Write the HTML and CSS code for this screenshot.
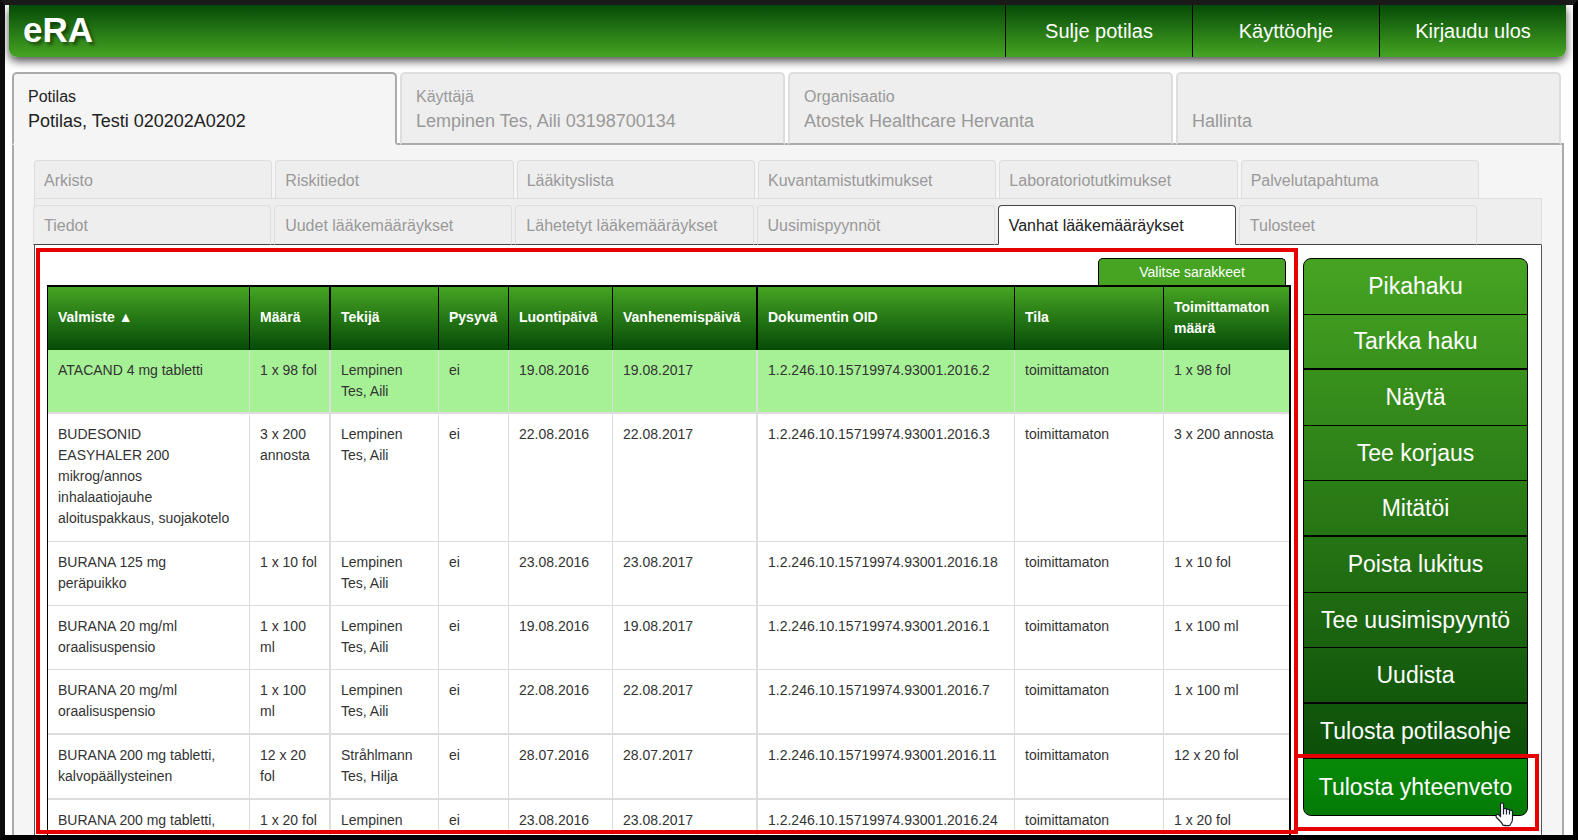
FILE: index.html
```html
<!DOCTYPE html>
<html lang="fi">
<head>
<meta charset="utf-8">
<title>eRA</title>
<link rel="stylesheet" href="styles.css">
</head>
<body>
<div class="app">
  <header class="topbar">
    <h1 class="brand">eRA</h1>
    <nav class="topnav">
      <a href="#">Sulje potilas</a>
      <a href="#">Käyttöohje</a>
      <a href="#">Kirjaudu ulos</a>
    </nav>
  </header>

  <main class="main">
    <nav class="tabs">
      <a class="tab active" href="#"><span class="tab-label">Potilas</span><span class="tab-value">Potilas, Testi 020202A0202</span></a>
      <a class="tab" href="#"><span class="tab-label">Käyttäjä</span><span class="tab-value">Lempinen Tes, Aili 03198700134</span></a>
      <a class="tab" href="#"><span class="tab-label">Organisaatio</span><span class="tab-value">Atostek Healthcare Hervanta</span></a>
      <a class="tab" href="#"><span class="tab-value">Hallinta</span></a>
    </nav>

    <section class="panel">
      <nav class="subtabs subtabs-upper">
        <a href="#">Arkisto</a>
        <a href="#">Riskitiedot</a>
        <a href="#">Lääkityslista</a>
        <a href="#">Kuvantamistutkimukset</a>
        <a href="#">Laboratoriotutkimukset</a>
        <a href="#">Palvelutapahtuma</a>
      </nav>
      <div class="strip">
        <nav class="subtabs subtabs-lower">
          <a href="#">Tiedot</a>
          <a href="#">Uudet lääkemääräykset</a>
          <a href="#">Lähetetyt lääkemääräykset</a>
          <a href="#">Uusimispyynnöt</a>
          <a class="active" href="#">Vanhat lääkemääräykset</a>
          <a href="#">Tulosteet</a>
        </nav>
      </div>

      <div class="content">
        <div class="list">
          <button class="columns-button" type="button">Valitse sarakkeet</button>
          <table class="grid">
            <colgroup>
              <col class="c-product"><col class="c-amount"><col class="c-author"><col class="c-permanent"><col class="c-created"><col class="c-expires"><col class="c-oid"><col class="c-state"><col class="c-left">
            </colgroup>
            <thead>
              <tr><th>Valmiste ▲</th><th>Määrä</th><th>Tekijä</th><th>Pysyvä</th><th>Luontipäivä</th><th>Vanhenemispäivä</th><th>Dokumentin OID</th><th>Tila</th><th>Toimittamaton määrä</th></tr>
            </thead>
            <tbody>
              <tr class="selected"><td>ATACAND 4 mg tabletti</td><td>1 x 98 fol</td><td>Lempinen Tes, Aili</td><td>ei</td><td>19.08.2016</td><td>19.08.2017</td><td>1.2.246.10.15719974.93001.2016.2</td><td>toimittamaton</td><td>1 x 98 fol</td></tr>
              <tr class="tall"><td>BUDESONID<br>EASYHALER 200 mikrog/annos inhalaatiojauhe aloituspakkaus, suojakotelo</td><td>3 x 200 annosta</td><td>Lempinen Tes, Aili</td><td>ei</td><td>22.08.2016</td><td>22.08.2017</td><td>1.2.246.10.15719974.93001.2016.3</td><td>toimittamaton</td><td>3 x 200 annosta</td></tr>
              <tr><td>BURANA 125 mg<br>peräpuikko</td><td>1 x 10 fol</td><td>Lempinen Tes, Aili</td><td>ei</td><td>23.08.2016</td><td>23.08.2017</td><td>1.2.246.10.15719974.93001.2016.18</td><td>toimittamaton</td><td>1 x 10 fol</td></tr>
              <tr><td>BURANA 20 mg/ml oraalisuspensio</td><td>1 x 100 ml</td><td>Lempinen Tes, Aili</td><td>ei</td><td>19.08.2016</td><td>19.08.2017</td><td>1.2.246.10.15719974.93001.2016.1</td><td>toimittamaton</td><td>1 x 100 ml</td></tr>
              <tr class="ruled"><td>BURANA 20 mg/ml oraalisuspensio</td><td>1 x 100 ml</td><td>Lempinen Tes, Aili</td><td>ei</td><td>22.08.2016</td><td>22.08.2017</td><td>1.2.246.10.15719974.93001.2016.7</td><td>toimittamaton</td><td>1 x 100 ml</td></tr>
              <tr class="ruled"><td>BURANA 200 mg tabletti, kalvopäällysteinen</td><td>12 x 20 fol</td><td>Stråhlmann Tes, Hilja</td><td>ei</td><td>28.07.2016</td><td>28.07.2017</td><td>1.2.246.10.15719974.93001.2016.11</td><td>toimittamaton</td><td>12 x 20 fol</td></tr>
              <tr><td>BURANA 200 mg tabletti,</td><td>1 x 20 fol</td><td>Lempinen</td><td>ei</td><td>23.08.2016</td><td>23.08.2017</td><td>1.2.246.10.15719974.93001.2016.24</td><td>toimittamaton</td><td>1 x 20 fol</td></tr>
            </tbody>
          </table>
        </div>

        <div class="actions">
          <button type="button">Pikahaku</button>
          <button type="button">Tarkka haku</button>
          <button type="button">Näytä</button>
          <button type="button">Tee korjaus</button>
          <button type="button">Mitätöi</button>
          <button type="button">Poista lukitus</button>
          <button type="button">Tee uusimispyyntö</button>
          <button type="button">Uudista</button>
          <button type="button">Tulosta potilasohje</button>
          <button type="button" class="hovered">Tulosta yhteenveto</button>
        </div>
      </div>
    </section>
  </main>

  <div class="mark mark-list"></div>
  <div class="mark mark-action"></div>
  <svg class="pointer" width="19" height="25" viewBox="0 0 19 25" aria-hidden="true">
    <path d="M5.5 14.5V2.5Q5.5 .8 7 .8T8.500 2.500V7.500Q8.700 6.300 10 6.300T11.500 7.800Q12 7 13.200 7.100T14.500 8.600Q15 8 16.200 8.200T17.500 10V16.500Q17.500 19 16.500 20.500T15 23.200Q12 24.200 8 23.200Q7.300 21.200 5.500 19.500L1.500 15.500Q.5 14 1.600 12.900T4 13Z" fill="#fff" stroke="#1c1c2c" stroke-width="1.200" stroke-linejoin="round"/>
    <path d="M8.500 7V12.500M11.500 8V12.500M14.500 9V12.500" fill="none" stroke="#1c1c2c" stroke-width="1.200"/>
  </svg>
</div>
</body>
</html>
```
FILE: styles.css
```css
* { box-sizing: border-box; }

body {
  margin: 0;
  font-family: "Liberation Sans", Arial, sans-serif;
  font-size: 16px;
  color: #333;
  background: #fff;
}

a { color: inherit; text-decoration: none; }
button { font-family: inherit; margin: 0; padding: 0; cursor: pointer; }

.app {
  position: relative;
  height: 100vh;
  overflow: hidden;
  border: 5px solid #000;
  border-top-color: #1a1a1a;
  border-left-color: #0d0d0d;
}

/* Top bar */
.topbar {
  display: flex;
  justify-content: space-between;
  height: 52px;
  margin: 0 7px 15px 4px;
  padding-left: 14px;
  background: linear-gradient(#054a08, #46a422);
  border-radius: 0 0 8px 8px;
  box-shadow: 0 4px 10px rgba(0, 0, 0, .7);
}
.brand {
  margin: 0;
  font-size: 35px;
  line-height: 50px;
  color: #fff;
  text-shadow: 3px 3px 3px rgba(0, 0, 0, .4);
}
.topnav { display: flex; }
.topnav a {
  width: 187px;
  border-left: 1px solid #000;
  font-size: 20px;
  line-height: 52px;
  text-align: center;
  color: #fff;
}

/* Main tabs */
.main { padding: 0 9px 0 7px; }
.tabs {
  position: relative;
  display: grid;
  grid-template-columns: repeat(4, 1fr);
  gap: 3px;
  padding-right: 3px;
}
.tab {
  display: flex;
  flex-direction: column;
  justify-content: flex-end;
  height: 73px;
  padding: 0 14px 10px;
  line-height: 24px;
  color: #999;
  background: #eee;
  border: 2px solid #ddd;
  border-bottom-color: #aaa;
  border-radius: 5px 5px 0 0;
}
.tab.active {
  color: #222;
  background: #f5f5f5;
  border-color: #aaa;
  border-bottom-color: #f5f5f5;
}
.tab-value { font-size: 18px; }

.panel {
  margin-top: -2px;
  padding: 15px 20px 0;
  background: #f5f5f5;
  border: 2px solid #aaa;
  border-bottom: 0;
}

/* Secondary tabs */
.subtabs {
  display: grid;
  grid-template-columns: repeat(6, 1fr);
  gap: 3px;
  padding-right: 63px;
}
.subtabs a {
  height: 38px;
  padding: 0 9px;
  line-height: 40px;
  color: #999;
  background: #eee;
  border: 1px solid #ddd;
  border-bottom: 0;
  border-radius: 4px 4px 0 0;
}
.strip {
  padding-top: 6px;
  background: #eee;
  border: 1px solid #ddd;
  border-bottom: 1px solid #444;
}
.subtabs-lower { margin: 0 -2px -1px; padding-right: 66px; }
.subtabs-lower a { height: 40px; padding-left: 10px; border-bottom: 1px solid #444; }
.subtabs-lower a.active {
  color: #222;
  background: #fff;
  border-color: #444;
  border-bottom-color: #fff;
}

/* Content */
.content {
  display: flex;
  align-items: flex-start;
  gap: 12px;
  padding: 13px 13px 0 12px;
  background: #fff;
  border: 1px solid #555;
  border-width: 0 1px;
}
.list { flex: 1; display: flex; flex-direction: column; }
.columns-button {
  align-self: flex-end;
  width: 188px;
  height: 27px;
  margin-right: 5px;
  font-size: 14px;
  color: #fff;
  background: #46a422;
  border: 1px solid #000;
  border-bottom: 0;
  border-radius: 5px 5px 0 0;
}

.grid {
  width: 100%;
  table-layout: fixed;
  border-collapse: separate;
  border-spacing: 0;
  border: 1px solid #000;
  border-width: 2px 2px 0 1px;
  font-size: 14px;
  line-height: 21px;
}
.c-product { width: 202px; }
.c-amount { width: 81px; }
.c-author { width: 108px; }
.c-permanent { width: 70px; }
.c-created { width: 104px; }
.c-expires { width: 145px; }
.c-oid { width: 257px; }
.c-state { width: 149px; }
.c-left { width: 125px; }

.grid th {
  height: 63px;
  padding: 0 10px 2px;
  text-align: left;
  color: #fff;
  background: linear-gradient(#46a422, #054a08);
  border-right: 1px solid #000;
}
.grid td {
  height: 64px;
  padding: 10px 10px 11px;
  vertical-align: top;
  border: 0 solid #ddd;
  border-width: 0 1px 1px 0;
}
.grid th:nth-child(2), .grid td:nth-child(2),
.grid th:nth-child(6), .grid td:nth-child(6) { border-right-width: 2px; }
.grid th:last-child, .grid td:last-child { border-right-width: 0; }
.grid .selected td { padding-bottom: 10px; background: #a6f195; }
.grid .selected td, .grid .ruled td { border-bottom-width: 2px; }
.grid .tall td { height: 128px; }

/* Actions */
.actions {
  display: grid;
  grid-template-rows: repeat(10, 1fr);
  width: 225px;
  height: 558px;
  overflow: hidden;
  background: linear-gradient(#46a422, #054506);
  border: 1px solid #000;
  border-radius: 8px;
}
.actions button {
  padding-top: 1px;
  font-size: 23px;
  color: #fff;
  background: none;
  border: 0;
  border-bottom: 1px solid #000;
}
.actions button:nth-child(3n+2) { border-bottom-width: 2px; }
.actions .hovered { background: linear-gradient(#078a07, #057a05); border-bottom: 0; }

/* Highlight frames and pointer */
.mark { position: absolute; border: 4px solid #e60000; pointer-events: none; }
.mark-list { top: 243px; right: 275px; bottom: 1px; left: 31px; }
.mark-action { top: 749px; right: 34px; width: 245px; height: 77px; }
.pointer { position: absolute; top: 797px; right: 59px; }
```
